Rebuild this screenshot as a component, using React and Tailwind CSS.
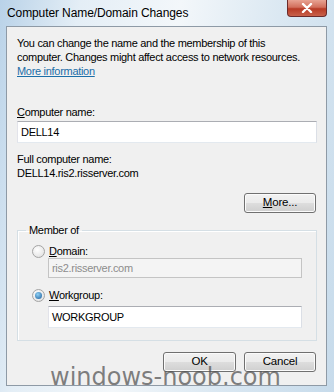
import React from 'react';

const font = { fontFamily: '"Liberation Sans", Arial, sans-serif' };

const VistaButton = ({ children, className = '' }) => (
  <button
    className={`h-[20px] w-[72px] rounded-[3px] border border-[#707070] bg-[linear-gradient(#f2f2f2_0%,#ebebeb_48%,#dddddd_52%,#cfcfcf_100%)] text-[11.5px] leading-none tracking-[-0.2px] text-black shadow-[inset_0_0_0_1px_#fbfbfb] ${className}`}
  >
    {children}
  </button>
);

const Radio = ({ checked }) => (
  <span className="flex h-[13px] w-[13px] items-center justify-center rounded-full border border-[#a4a4a4] bg-[radial-gradient(circle_at_40%_35%,#ffffff,#dcdcdc)]">
    {checked && (
      <span className="h-[7px] w-[7px] rounded-full bg-[radial-gradient(circle_at_40%_35%,#8fd1f5,#1c5c9a)]" />
    )}
  </span>
);

const Field = ({ value, disabled, className = '' }) => (
  <div
    className={`flex items-center border px-[3px] ${
      disabled
        ? 'border-[#c4c4c4] bg-[#f4f4f4] text-[#8d8d8d]'
        : 'border-[#abadb3] border-r-[#dbdfe6] border-b-[#e3e9ef] border-l-[#e2e3ea] bg-white text-black'
    } ${className}`}
  >
    {value}
  </div>
);

const App = () => {
  return (
    <div
      className="relative flex h-[392px] w-[334px] flex-col overflow-hidden bg-[linear-gradient(100deg,#b9d2e8_0%,#e4eef6_20%,#f3f7fa_45%,#dbe8f2_70%,#c7dbeb_100%)]"
      style={font}
    >
      {/* title bar */}
      <div className="flex h-[26px] items-center justify-between pl-[7px] pr-[7px]">
        <span className="text-[12px] tracking-[-0.1px] text-black">Computer Name/Domain Changes</span>
        <div className="mb-[9px] flex h-[17px] w-[40px] items-center justify-center self-start rounded-b-[4px] border border-t-0 border-[#6b2a2a] bg-[linear-gradient(#e8a393_0%,#d26f5c_45%,#b83a25_55%,#c8614a_100%)]">
          <svg width="12" height="10" viewBox="0 0 12 10">
            <path d="M2 1 L10 9 M10 1 L2 9" stroke="#ffffff" strokeWidth="2.4" strokeLinecap="round" />
          </svg>
        </div>
      </div>

      {/* client area */}
      <div className="mx-[6px] mr-[7px] flex h-[360px] flex-col border border-[#8e9aa6] bg-[#f0f0f0] pl-[10px] pr-[9px] pt-[9px] text-[11px] tracking-[-0.3px] text-black">
        <p className="w-[295px] leading-[14px]">
          You can change the name and the membership of this computer. Changes might affect access to network resources.
        </p>
        <span className="self-start leading-[14px] text-[#1b6ea8] underline">More information</span>

        <span className="mt-[27px] leading-[14px]">
          <span className="underline">C</span>omputer name:
        </span>
        <Field value="DELL14" className="mt-[2px] h-[22px]" />

        <span className="mt-[9px] leading-[14px]">Full computer name:</span>
        <span className="leading-[14px]">DELL14.ris2.risserver.com</span>

        <VistaButton className="ml-auto mr-[1px] mt-[13px]">
          <span className="underline">M</span>ore...
        </VistaButton>

        <fieldset className="mt-[10px] border border-[#d5dfe5] pb-[12px] shadow-[inset_1px_1px_0_#ffffff]">
          <legend className="ml-[8px] px-[3px] leading-[14px]">Member of</legend>
          <div className="mt-[8px] flex h-[13px] items-center gap-[4px] pl-[14px]">
            <Radio />
            <span>
              <span className="underline">D</span>omain:
            </span>
          </div>
          <Field value="ris2.risserver.com" disabled className="ml-[30px] mt-0 h-[20px] w-[254px]" />
          <div className="mt-[11px] flex h-[13px] items-center gap-[4px] pl-[14px]">
            <Radio checked />
            <span>
              <span className="underline">W</span>orkgroup:
            </span>
          </div>
          <Field value="WORKGROUP" className="ml-[30px] mt-[4px] h-[22px] w-[254px]" />
        </fieldset>

        <div className="mt-[11px] flex justify-end gap-[8px] pr-[1px]">
          <VistaButton className="w-[73px]">OK</VistaButton>
          <VistaButton>Cancel</VistaButton>
        </div>
      </div>

      {/* watermark */}
      <span
        className="pointer-events-none absolute bottom-[3px] left-[50px] whitespace-nowrap text-[24px] leading-none text-[rgba(80,80,80,0.72)]"
        style={{ fontFamily: '"DejaVu Sans", sans-serif' }}
      >
        windows-noob.com
      </span>
    </div>
  );
};

export default App;
